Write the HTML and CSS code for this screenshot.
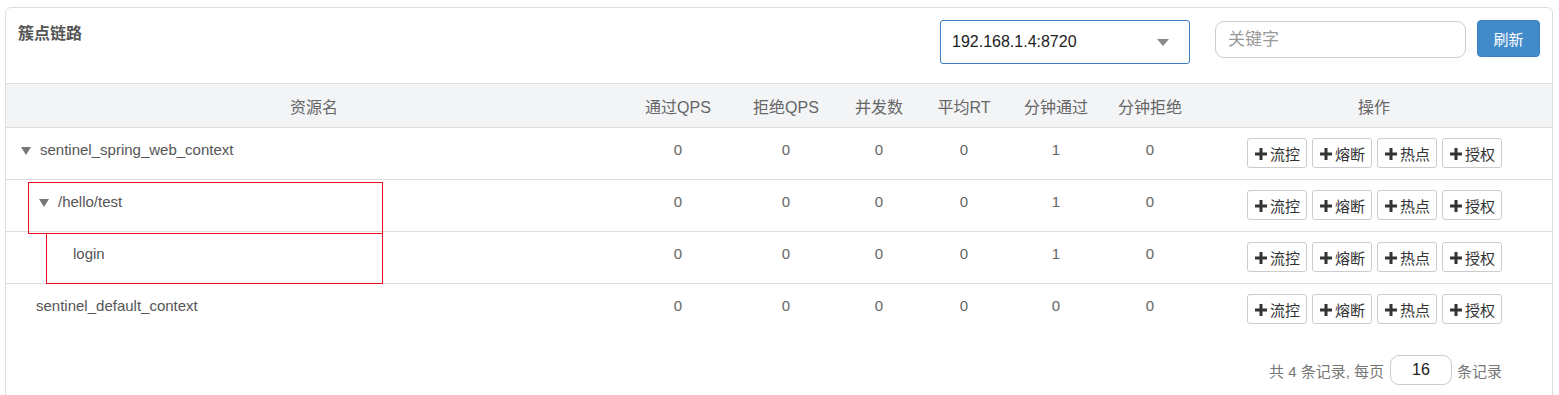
FILE: index.html
```html
<!DOCTYPE html>
<html lang="zh-CN">
<head>
  <meta charset="UTF-8">
  <title>簇点链路</title>
  <link rel="stylesheet" href="styles.css">
</head>
<body>
  <div class="card">
    <div class="card-head">
      <h3 class="title">簇点链路</h3>
      <div class="tools">
        <div class="select">
          <span>192.168.1.4:8720</span>
          <svg class="caret" width="12" height="7" viewBox="0 0 12 7"><path d="M0 0h12L6 7z" fill="#888"/></svg>
        </div>
        <input class="search" type="text" placeholder="关键字">
        <button class="btn-primary">刷新</button>
      </div>
    </div>

    <table class="grid">
      <colgroup>
        <col style="width:616px"><col style="width:112px"><col style="width:104px"><col style="width:82px">
        <col style="width:88px"><col style="width:96px"><col style="width:92px"><col style="width:356px">
      </colgroup>
      <thead>
        <tr>
          <th>资源名</th><th>通过QPS</th><th>拒绝QPS</th><th>并发数</th><th>平均RT</th><th>分钟通过</th><th>分钟拒绝</th><th>操作</th>
        </tr>
      </thead>
      <tbody>
        <tr>
          <td class="name lvl0"><svg class="tri" width="10" height="8" viewBox="0 0 10 8"><path d="M0 0h10L5 8z" fill="#777"/></svg>sentinel_spring_web_context</td>
          <td>0</td><td>0</td><td>0</td><td>0</td><td>1</td><td>0</td>
          <td class="ops"><button>流控</button><button>熔断</button><button>热点</button><button>授权</button></td>
        </tr>
        <tr>
          <td class="name lvl1"><svg class="tri" width="10" height="8" viewBox="0 0 10 8"><path d="M0 0h10L5 8z" fill="#777"/></svg>/hello/test</td>
          <td>0</td><td>0</td><td>0</td><td>0</td><td>1</td><td>0</td>
          <td class="ops"><button>流控</button><button>熔断</button><button>热点</button><button>授权</button></td>
        </tr>
        <tr>
          <td class="name lvl2">login</td>
          <td>0</td><td>0</td><td>0</td><td>0</td><td>1</td><td>0</td>
          <td class="ops"><button>流控</button><button>熔断</button><button>热点</button><button>授权</button></td>
        </tr>
        <tr class="last">
          <td class="name lvl-root">sentinel_default_context</td>
          <td>0</td><td>0</td><td>0</td><td>0</td><td>0</td><td>0</td>
          <td class="ops"><button>流控</button><button>熔断</button><button>热点</button><button>授权</button></td>
        </tr>
      </tbody>
    </table>

    <div class="pager">
      <span>共 4 条记录, 每页</span>
      <input class="page-size" type="text" value="16">
      <span>条记录</span>
    </div>

    <div class="mark mark-a"></div>
    <div class="mark mark-b"></div>
  </div>
</body>
</html>
```

FILE: styles.css
```css
body {
  margin: 0;
  padding: 7px 6px 0 5px;
  background: #fff;
  font-family: "Liberation Sans", Arial, "Noto Sans CJK SC", sans-serif;
  font-size: 15px;
  color: #666;
}
.card {
  position: relative;
  width: 1546px;
  height: 420px;
  border: 1px solid #ddd;
  border-radius: 6px;
}
.card-head {
  display: flex;
  justify-content: space-between;
  height: 75px;
  padding: 0 12px 0 12px;
}
.title {
  margin: 15px 0 0;
  font-size: 16px;
  font-weight: bold;
  color: #555;
  line-height: 22px;
}
.tools {
  display: flex;
  align-items: flex-start;
  padding-top: 12px;
}
.select {
  display: flex;
  align-items: center;
  justify-content: space-between;
  box-sizing: border-box;
  width: 250px;
  height: 44px;
  padding: 0 20px 0 11px;
  border: 1px solid #3a7dc0;
  border-radius: 3px;
  font-size: 16px;
  color: #222;
}
.search {
  box-sizing: border-box;
  width: 251px;
  height: 37px;
  margin: 1px 0 0 25px;
  padding: 0 12px;
  border: 1px solid #ccc;
  border-radius: 9px;
  font-family: "Liberation Sans", "Noto Sans CJK SC", sans-serif;
  font-size: 17px;
  outline: none;
}
.search::placeholder {
  color: #999;
}
.btn-primary {
  box-sizing: border-box;
  width: 63px;
  height: 37px;
  margin-left: 11px;
  border: 1px solid #3b82c4;
  border-radius: 4px;
  background: #428bca;
  color: #fff;
  font-family: "Liberation Sans", "Noto Sans CJK SC", sans-serif;
  font-size: 15px;
}
.grid {
  width: 1546px;
  border-collapse: collapse;
  table-layout: fixed;
}
.grid th {
  height: 43px;
  padding: 0;
  background: #f3f4f6;
  border-top: 1px solid #ddd;
  border-bottom: 1px solid #ddd;
  font-size: 16px;
  font-weight: normal;
  color: #666;
  text-align: center;
  vertical-align: middle;
}
.grid td {
  height: 30px;
  padding: 12px 0 9px;
  border-bottom: 1px solid #ddd;
  text-align: center;
  vertical-align: top;
  line-height: 19px;
}
.grid tr.last td {
  border-bottom: none;
}
.grid td.name {
  text-align: left;
  color: #555;
}
.tri {
  margin-right: 9px;
  vertical-align: 0;
}
.lvl0 { padding-left: 15px !important; }
.lvl1 { padding-left: 33px !important; }
.lvl2 { padding-left: 67px !important; }
.lvl-root { padding-left: 30px !important; }
.grid td.ops {
  padding-top: 10px;
  padding-bottom: 11px;
  font-size: 0;
}
.ops button {
  box-sizing: border-box;
  width: 60px;
  height: 30px;
  margin: 0 2px;
  padding: 0 0 0 17px;
  border: 1px solid #ccc;
  border-radius: 3px;
  background: #fff url("data:image/svg+xml,%3Csvg xmlns='http://www.w3.org/2000/svg' width='12' height='12'%3E%3Cpath d='M4.5 0h3v4.5H12v3H7.5V12h-3V7.5H0v-3h4.5z' fill='%23333'/%3E%3C/svg%3E") no-repeat 7px 9px;
  color: #333;
  font-family: "Liberation Sans", "Noto Sans CJK SC", sans-serif;
  font-size: 15px;
  vertical-align: top;
}
.ops button + button {
  margin-left: 3px;
}
.pager {
  display: flex;
  justify-content: flex-end;
  align-items: center;
  padding: 20px 50px 0 0;
  color: #777;
}
.page-size {
  box-sizing: border-box;
  width: 62px;
  height: 30px;
  margin: 0 5px 0 6px;
  border: 1px solid #ccc;
  border-radius: 9px;
  text-align: center;
  font-family: "Liberation Sans", sans-serif;
  font-size: 16px;
  color: #222;
}
.mark {
  position: absolute;
  border: 1px solid #e8101c;
}
.mark-a {
  left: 22px;
  top: 174px;
  width: 353px;
  height: 50px;
}
.mark-b {
  left: 40px;
  top: 225px;
  width: 335px;
  height: 49px;
}
```
